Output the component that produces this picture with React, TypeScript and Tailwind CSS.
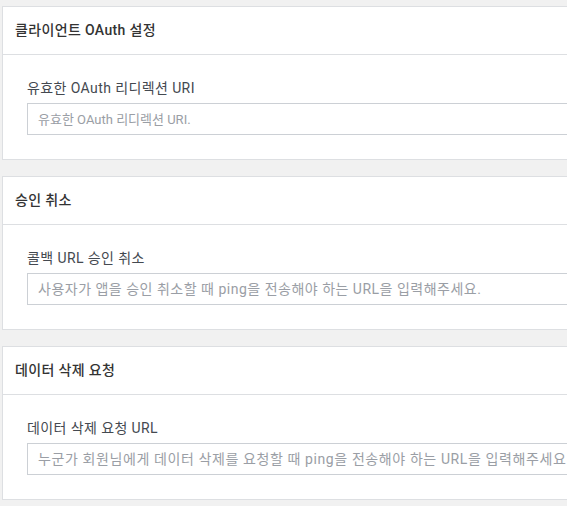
import React from "react";

const font = { fontFamily: "Roboto, 'Noto Sans CJK KR', sans-serif" };

function Card({
  title,
  label,
  placeholder,
  phClass,
}: {
  title: string;
  label: string;
  placeholder: string;
  phClass: string;
}) {
  return (
    <div className="w-[640px] bg-white border border-[#dddfe2]">
      <div className="h-[48px] flex items-center px-3 border-b border-[#dddfe2]">
        <span className="text-[14px] font-medium tracking-[0.35px] text-[#333333]">{title}</span>
      </div>
      <div className="pl-6 pr-6 pt-[23px] pb-[24px]">
        <div className="text-[14px] leading-[20px] tracking-[0.4px] text-[#444950] mb-[5px]">{label}</div>
        <input
          className={
            "w-full h-[32px] border border-[#ccd0d5] px-[10px] outline-none placeholder:text-[#9a9ea5] bg-white " +
            phClass
          }
          placeholder={placeholder}
          style={font}
        />
      </div>
    </div>
  );
}

export default function App() {
  return (
    <div className="w-[567px] h-[506px] overflow-hidden bg-[#f1f1f1]" style={font}>
      <div className="pt-[6px] pl-[2px] flex flex-col gap-[16px]">
        <Card
          title="클라이언트 OAuth 설정"
          label="유효한 OAuth 리디렉션 URI"
          placeholder="유효한 OAuth 리디렉션 URI."
          phClass="text-[13px]"
        />
        <Card
          title="승인 취소"
          label="콜백 URL 승인 취소"
          placeholder="사용자가 앱을 승인 취소할 때 ping을 전송해야 하는 URL을 입력해주세요."
          phClass="text-[14px] tracking-[0.5px]"
        />
        <Card
          title="데이터 삭제 요청"
          label="데이터 삭제 요청 URL"
          placeholder="누군가 회원님에게 데이터 삭제를 요청할 때 ping을 전송해야 하는 URL을 입력해주세요."
          phClass="text-[14px] tracking-[0.6px]"
        />
      </div>
    </div>
  );
}
